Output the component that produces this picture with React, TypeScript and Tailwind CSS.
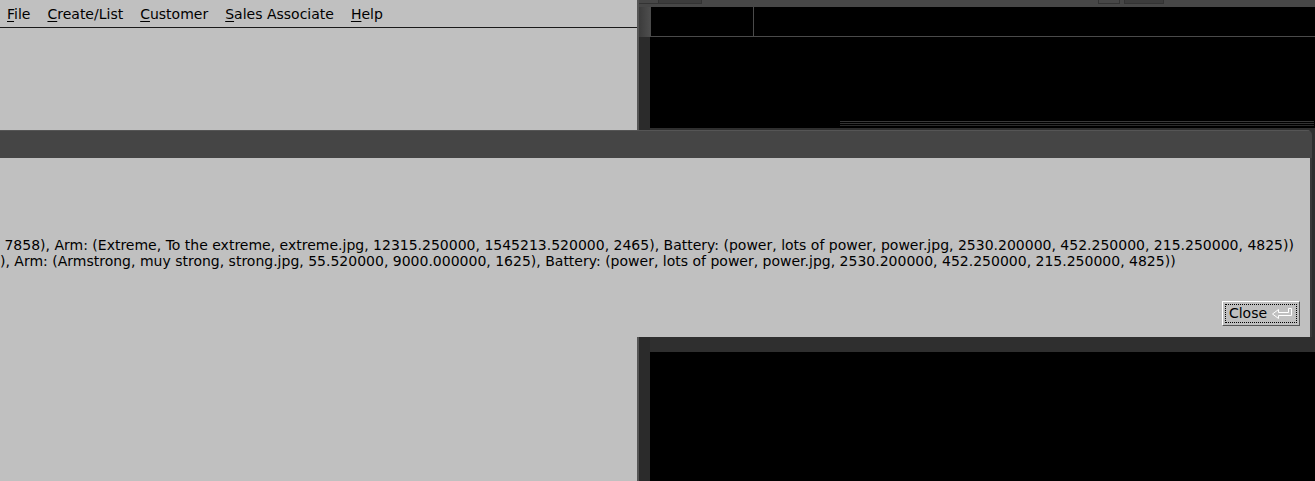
import React from "react";

const line1 =
  " 7858), Arm: (Extreme, To the extreme, extreme.jpg, 12315.250000, 1545213.520000, 2465), Battery: (power, lots of power, power.jpg, 2530.200000, 452.250000, 215.250000, 4825))";
const line2 =
  "), Arm: (Armstrong, muy strong, strong.jpg, 55.520000, 9000.000000, 1625), Battery: (power, lots of power, power.jpg, 2530.200000, 452.250000, 215.250000, 4825))";

const menu = [
  { key: "F", rest: "ile" },
  { key: "C", rest: "reate/List" },
  { key: "C", rest: "ustomer" },
  { key: "S", rest: "ales Associate" },
  { key: "H", rest: "elp" },
];

function EnterIcon() {
  return (
    <svg width="22" height="14" viewBox="0 0 22 14" className="ml-1">
      <path
        d="M20.5 1.5 V8.5 H7.5 V11.5 L1.5 7 L7.5 2.5 V5.5 H17.5 V1.5 Z"
        fill="none"
        stroke="#ffffff"
        strokeWidth="1"
      />
    </svg>
  );
}

export default function App() {
  return (
    <div
      className="relative w-[1315px] h-[481px] overflow-hidden bg-black"
      style={{ fontFamily: '"DejaVu Sans", "Liberation Sans", sans-serif' }}
    >
      {/* Right window (dark, behind) */}
      <div className="absolute left-[638px] top-0 w-[677px] h-[481px] bg-[#2e2e2e] flex flex-col">
        <div className="h-[7px] bg-[#474747] relative shrink-0">
          <div className="absolute left-[-10px] top-0 w-[34px] h-[4px] border border-t-0 border-[#333]" />
          <div className="absolute left-[20px] top-0 w-[44px] h-[4px] border border-t-0 border-[#333] bg-[#3c3c3c]" />
          <div className="absolute left-[460px] top-0 w-[22px] h-[4px] border border-t-0 border-[#333]" />
          <div className="absolute left-[486px] top-0 w-[40px] h-[4px] border border-t-0 border-[#333] bg-[#3c3c3c]" />
        </div>
        <div className="flex h-[30px] shrink-0">
          <div className="w-[12px] bg-gradient-to-r from-[#3a3a3a] to-[#4d4d4d]" />
          <div className="w-[104px] bg-black border border-[#4a4a4a] border-t-0" />
          <div className="flex-1 bg-black border-b border-[#4a4a4a]" />
        </div>
        <div className="flex flex-1">
          <div className="w-[12px] bg-[#2b2b2b]" />
          <div className="flex-1 bg-black" />
        </div>
      </div>

      {/* Left window */}
      <div className="absolute left-0 top-0 w-[639px] h-[481px] bg-[#c0c0c0] border-r-2 border-[#555] flex flex-col">
        <div className="h-[28px] flex items-center border-b border-[#1a1a1a] pl-[7px] text-[14px] text-black gap-[17px]">
          {menu.map((m, i) => (
            <span key={i} className="leading-none">
              <span className="underline underline-offset-2">{m.key}</span>
              {m.rest}
            </span>
          ))}
        </div>
        <div className="flex-1 bg-[#c0c0c0]" />
      </div>

      {/* Shadow edge behind dialog */}
      <div className="absolute left-[840px] top-[121px] w-[474px] h-[9px] flex flex-col gap-[1px]">
        <div className="h-[1px] bg-[#3a3a3a]" />
        <div className="h-[1px] bg-[#333]" />
        <div className="h-[1px] bg-[#2c2c2c]" />
      </div>
      <div className="absolute left-[650px] top-[128px] w-[665px] h-[224px] bg-[#2f2f2f]" />

      {/* Dialog */}
      <div className="absolute left-0 top-[130px] w-[1312px] h-[207px] flex flex-col rounded-tr-[5px] overflow-hidden">
        <div className="h-[28px] bg-[#454545] border-t border-[#555] shrink-0" />
        <div className="flex-1 bg-[#c0c0c0] border-r-2 border-[#3a3a3a] flex flex-col">
          <div className="h-[79px]" />
          <div className="text-[14px] leading-[16px] text-black whitespace-pre">
            <div>{line1}</div>
            <div>{line2}</div>
          </div>
          <div className="flex-1 flex items-end justify-end pr-[10px] pb-[11px]">
            <button className="h-[25px] w-[78px] bg-[#c0c0c0] border border-t-white border-l-white border-r-[#555] border-b-[#555] p-[2px] flex">
              <div className="flex-1 border border-dotted border-black flex items-center justify-center text-[14px] text-black">
                Close
                <EnterIcon />
              </div>
            </button>
          </div>
        </div>
      </div>
    </div>
  );
}
